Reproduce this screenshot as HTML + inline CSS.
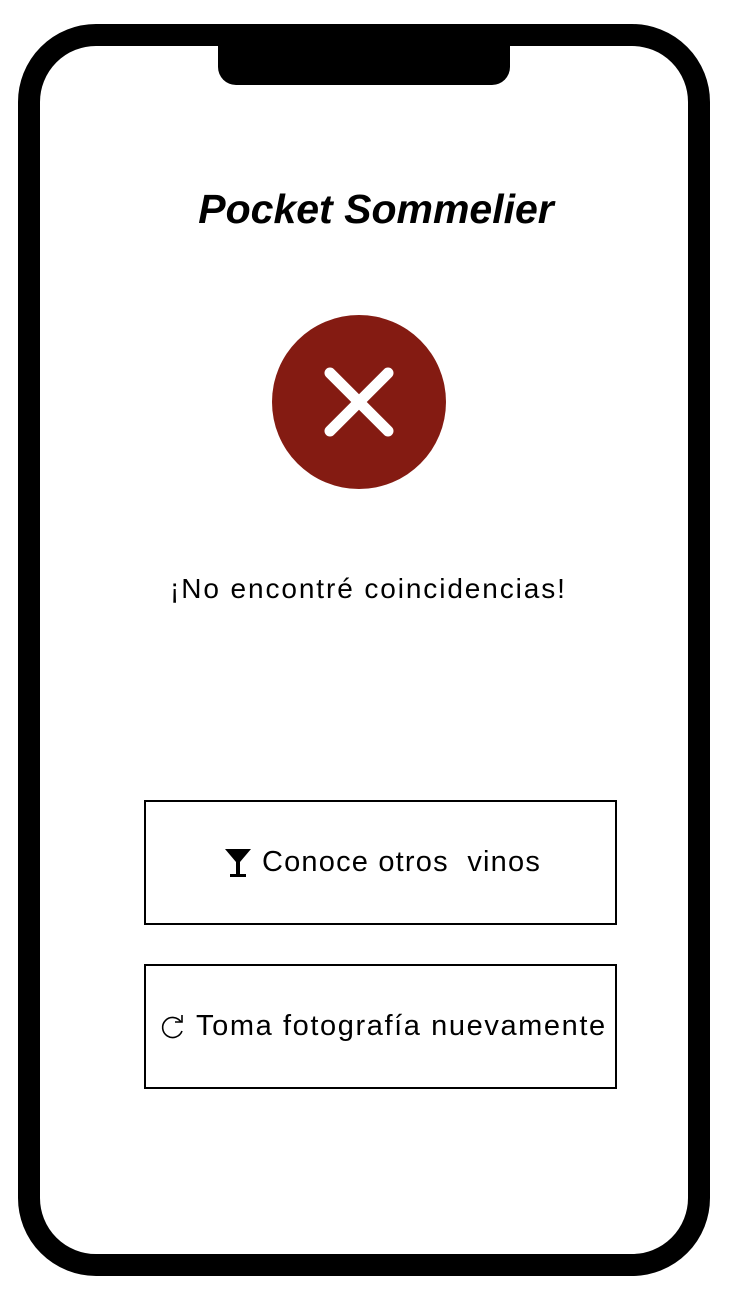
<!DOCTYPE html>
<html><head><meta charset="utf-8"><style>
body{margin:0;width:738px;height:1296px;background:#fff;position:relative;overflow:hidden;font-family:"Liberation Sans",sans-serif;}
.phone{position:absolute;left:18px;top:24px;width:648px;height:1208px;border:22px solid #000;border-radius:78px;}
.notch{position:absolute;left:218px;top:40px;width:292px;height:45px;background:#000;border-radius:0 0 18px 18px;}
.title{position:absolute;left:0;width:738px;text-align:center;top:186px;font-size:41px;font-weight:bold;font-style:italic;padding-left:14px;box-sizing:border-box;}
.msg{position:absolute;left:170px;top:573px;font-size:28px;letter-spacing:1.9px;}
.btn{position:absolute;left:144px;width:473px;height:125px;box-sizing:border-box;border:2px solid #000;display:flex;align-items:center;justify-content:center;font-size:29px;}
</style></head><body>
<div class="phone"></div>
<div class="notch"></div>
<div class="title">Pocket Sommelier</div>
<svg style="position:absolute;left:272px;top:315px" width="174" height="174"><circle cx="87" cy="87" r="87" fill="#841b12"/><path d="M58 58L116 116M116 58L58 116" stroke="#fff" stroke-width="11" stroke-linecap="round"/></svg>
<div class="msg">¡No encontré coincidencias!</div>
<div class="btn" style="top:800px;letter-spacing:1.2px;padding-left:4px"><svg width="28" height="32" viewBox="0 0 28 32" style="margin-right:10px"><path d="M1 2H27L16 15V27H22V30H6V27H12V15Z" fill="#000"/></svg>Conoce otros&nbsp; vinos</div>
<div class="btn" style="top:964px;justify-content:flex-start;padding-left:14px;letter-spacing:1.6px"><svg width="26" height="26" viewBox="0 0 26 26" style="margin-right:10px"><path d="M21 8A10 10 0 1 0 22 17" fill="none" stroke="#000" stroke-width="1.6"/><path d="M15 8H22V1" fill="none" stroke="#000" stroke-width="1.6"/></svg>Toma fotografía nuevamente</div>
</body></html>
